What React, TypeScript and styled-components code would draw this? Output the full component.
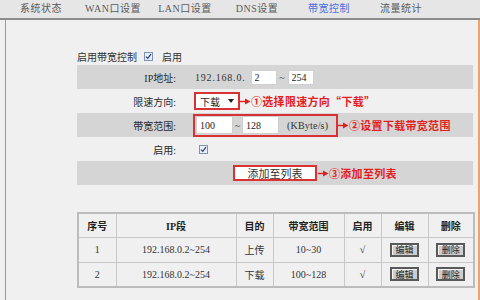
import React from "react";
import styled, { createGlobalStyle } from "styled-components";

const Global = createGlobalStyle`
  html, body {
    margin: 0;
    padding: 0;
    width: 480px;
    height: 300px;
    overflow: hidden;
    background: #f0f0f0;
    font-family: "Liberation Serif", "Noto Sans CJK SC", serif;
    color: #333;
  }
  * { box-sizing: border-box; }
`;

const Nav = styled.nav`
  height: 20px;
  background: #e6e6e6;
  border-bottom: 2px solid #8c8c8c;
  display: grid;
  grid-template-columns: repeat(6, 72px);
  padding-left: 5px;
  align-items: center;
`;

const Tab = styled.div<{ $active?: boolean }>`
  text-align: center;
  font-size: 10px;
  letter-spacing: 0.5px;
  color: ${(p) => (p.$active ? "#4a6fe0" : "#5a5a5a")};
  line-height: 16px;
`;

const Frame = styled.main`
  margin-left: 5px;
  width: 475px;
  height: 280px;
  border-left: 1px solid #9a9a9a;
  border-right: 2px solid #eaa46c;
  padding: 27px 5px 0 71px;
  display: flex;
  flex-direction: column;
`;

const ToggleRow = styled.div`
  height: 18px;
  display: flex;
  align-items: center;
  font-size: 10px;
  color: #333;
`;

const ToggleLabel = styled.span`
  margin-right: 7px;
`;

const Box = styled.span<{ $gap?: number }>`
  display: inline-flex;
  width: 9px;
  height: 9px;
  border: 1px solid #7f93b5;
  background: #e9eef8;
  margin-right: ${(p) => p.$gap ?? 0}px;
  align-items: center;
  justify-content: center;
`;

const FormRow = styled.div<{ $shaded?: boolean }>`
  display: grid;
  grid-template-columns: 99px 1fr;
  column-gap: 17px;
  align-items: center;
  height: 24px;
  background: ${(p) => (p.$shaded ? "#d5d5d5" : "transparent")};
`;

const Label = styled.div`
  text-align: right;
  font-size: 10px;
  color: #2a2a2a;
`;

const Field = styled.div<{ $indent?: number }>`
  display: flex;
  align-items: center;
  padding-left: ${(p) => p.$indent ?? 0}px;
  font-size: 10px;
`;

const Prefix = styled.span`
  margin-right: 5px;
  letter-spacing: 0.8px;
`;

const TextBox = styled.input<{ $w: number; $h: number }>`
  width: ${(p) => p.$w}px;
  height: ${(p) => p.$h}px;
  border: 1px solid #d0d0d0;
  background: #fff;
  padding: 0 0 0 3px;
  margin: 0;
  font-family: "Liberation Serif", serif;
  font-size: 10px;
  color: #222;
  outline: none;
`;

const Tilde = styled.span<{ $w: number }>`
  width: ${(p) => p.$w}px;
  text-align: center;
  color: #444;
`;

const RedSelect = styled.div`
  width: 46px;
  height: 18px;
  border: 2px solid #d83232;
  background: #fff;
  display: flex;
  align-items: center;
  justify-content: space-between;
  padding: 0 4px 0 4px;
  font-size: 10px;
  color: #222;
`;

const Caret = styled.span`
  width: 0;
  height: 0;
  border-left: 3px solid transparent;
  border-right: 3px solid transparent;
  border-top: 4px solid #222;
`;

const RedFrame = styled.div`
  width: 145px;
  height: 23px;
  border: 2px solid #d83232;
  display: flex;
  align-items: center;
  padding-left: 1px;
`;

const Unit = styled.span`
  margin-left: 8px;
  font-family: "Liberation Serif", serif;
  font-size: 10px;
  letter-spacing: 0.2px;
  color: #333;
`;

const Note = styled.span`
  display: inline-flex;
  align-items: center;
  color: #e21e1e;
  font-family: "Noto Sans CJK SC", sans-serif;
  font-weight: 700;
  font-size: 11px;
  letter-spacing: 0.3px;
  white-space: nowrap;
`;

const AddRow = styled.div`
  height: 24px;
  background: #d5d5d5;
  display: flex;
  align-items: center;
  justify-content: center;
`;

const AddWrap = styled.div`
  position: relative;
`;

const AddButton = styled.div`
  width: 84px;
  height: 16px;
  border: 2px solid #d83232;
  background: #fff;
  display: flex;
  align-items: center;
  justify-content: center;
  font-family: "Noto Sans CJK SC", sans-serif;
  font-size: 11px;
  color: #333;
`;

const AddNote = styled(Note)`
  position: absolute;
  left: 100%;
  top: 50%;
  transform: translateY(-50%);
  margin-left: 1px;
`;

const Table = styled.table`
  margin-top: 27px;
  width: 396px;
  border-collapse: collapse;
  border: 2px solid #bcbcbc;
  table-layout: fixed;
  font-size: 10px;
`;

const Col = styled.col<{ $w: number }>`
  width: ${(p) => p.$w}px;
`;

const Th = styled.th`
  height: 24px;
  border: 1px solid #c8c8c8;
  font-weight: 700;
  color: #222;
  text-align: center;
  padding: 0;
`;

const Td = styled.td`
  height: 25px;
  border: 1px solid #c8c8c8;
  text-align: center;
  color: #333;
  padding: 0;
`;

const MiniBtn = styled.span`
  display: inline-flex;
  align-items: center;
  justify-content: center;
  width: 29px;
  height: 14px;
  border: 2px solid #595959;
  background: #cdcdcd;
  box-shadow: inset 1px 1px 0 #f4f4f4;
  font-family: "Noto Sans CJK SC", sans-serif;
  font-size: 9px;
  color: #222;
  vertical-align: middle;
`;

const Check = () => (
  <svg width="7" height="7" viewBox="0 0 7 7">
    <path d="M1 3.6 L2.8 5.4 L6 1.2" fill="none" stroke="#2b3f7a" strokeWidth="1.2" />
  </svg>
);

const Arrow = () => (
  <svg width="11" height="7" viewBox="0 0 11 7">
    <line x1="0" y1="3.5" x2="6" y2="3.5" stroke="#e21e1e" strokeWidth="1.4" />
    <path d="M5 0.5 L10.5 3.5 L5 6.5 Z" fill="#e21e1e" />
  </svg>
);

const rows = [
  { n: "1", ip: "192.168.0.2~254", dir: "上传", bw: "10~30" },
  { n: "2", ip: "192.168.0.2~254", dir: "下载", bw: "100~128" },
];

export default function App() {
  return (
    <>
      <Global />
      <Nav>
        <Tab>系统状态</Tab>
        <Tab>WAN口设置</Tab>
        <Tab>LAN口设置</Tab>
        <Tab>DNS设置</Tab>
        <Tab $active>带宽控制</Tab>
        <Tab>流量统计</Tab>
      </Nav>
      <Frame>
        <ToggleRow>
          <ToggleLabel>启用带宽控制</ToggleLabel>
          <Box $gap={9}>
            <Check />
          </Box>
          <span>启用</span>
        </ToggleRow>

        <FormRow $shaded>
          <Label>IP地址:</Label>
          <Field $indent={2}>
            <Prefix>192.168.0.</Prefix>
            <TextBox $w={26} $h={15} readOnly value="2" />
            <Tilde $w={11}>~</Tilde>
            <TextBox $w={26} $h={15} readOnly value="254" />
          </Field>
        </FormRow>

        <FormRow>
          <Label>限速方向:</Label>
          <Field $indent={1}>
            <RedSelect>
              <span>下载</span>
              <Caret />
            </RedSelect>
            <Arrow />
            <Note>①选择限速方向“下载”</Note>
          </Field>
        </FormRow>

        <FormRow $shaded>
          <Label>带宽范围:</Label>
          <Field>
            <RedFrame>
              <TextBox $w={37} $h={18} readOnly value="100" />
              <Tilde $w={9}>~</Tilde>
              <TextBox $w={37} $h={18} readOnly value="128" />
              <Unit>(KByte/s)</Unit>
            </RedFrame>
            <Arrow />
            <Note>②设置下载带宽范围</Note>
          </Field>
        </FormRow>

        <FormRow>
          <Label>启用:</Label>
          <Field $indent={6}>
            <Box>
              <Check />
            </Box>
          </Field>
        </FormRow>

        <AddRow>
          <AddWrap>
            <AddButton>添加至列表</AddButton>
            <AddNote>
              <Arrow />
              ③添加至列表
            </AddNote>
          </AddWrap>
        </AddRow>

        <Table>
          <colgroup>
            <Col $w={38} />
            <Col $w={120} />
            <Col $w={37} />
            <Col $w={71} />
            <Col $w={37} />
            <Col $w={47} />
            <Col $w={46} />
          </colgroup>
          <thead>
            <tr>
              <Th>序号</Th>
              <Th>IP段</Th>
              <Th>目的</Th>
              <Th>带宽范围</Th>
              <Th>启用</Th>
              <Th>编辑</Th>
              <Th>删除</Th>
            </tr>
          </thead>
          <tbody>
            {rows.map((r) => (
              <tr key={r.n}>
                <Td>{r.n}</Td>
                <Td>{r.ip}</Td>
                <Td>{r.dir}</Td>
                <Td>{r.bw}</Td>
                <Td>√</Td>
                <Td>
                  <MiniBtn>编辑</MiniBtn>
                </Td>
                <Td>
                  <MiniBtn>删除</MiniBtn>
                </Td>
              </tr>
            ))}
          </tbody>
        </Table>
      </Frame>
    </>
  );
}
